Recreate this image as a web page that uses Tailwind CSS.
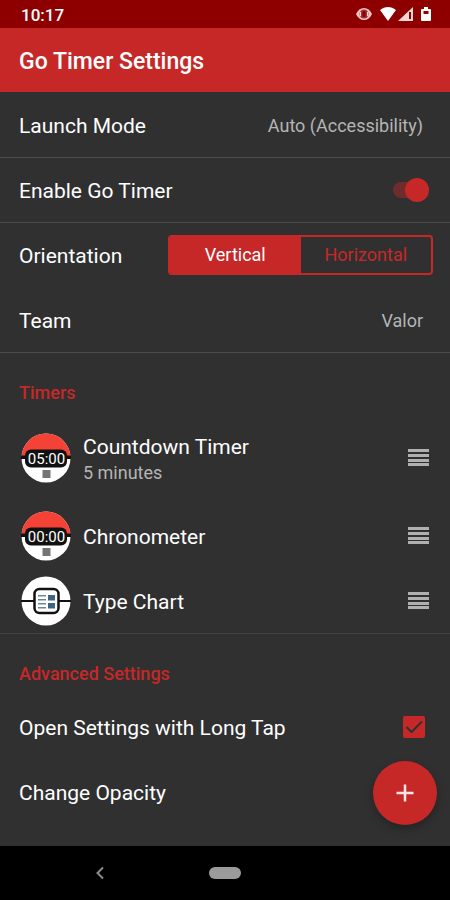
<!DOCTYPE html>
<html lang="en">
<head>
<meta charset="utf-8">
<meta name="viewport" content="width=device-width, initial-scale=1">
<title>Go Timer Settings</title>
<script src="https://cdn.jsdelivr.net/npm/@tailwindcss/browser@4"></script>
</head>
<body class="flex min-h-screen flex-col bg-[#303030] font-['Roboto',sans-serif] text-[21px] leading-7 text-white">
  <!-- Status bar -->
  <div class="flex h-7 items-center justify-between bg-[#8e0000] pt-0.5 pr-[18px] pl-[21px]">
    <span class="text-[17px] font-medium">10:17</span>
    <div class="flex items-center">
      <svg class="mr-2 h-4 w-4" viewBox="0 0 16 16" aria-hidden="true"><path d="M0 7C2 3 4.500 1 8 1s6 2 8 6c-2 4-4.500 6-8 6S2 11 0 7z" fill="#f3c6c6"/><circle cx="8" cy="7" r="4.500" fill="#a33030"/><rect x="6.500" y="4" width="3" height="6" rx="1.500" fill="#8e0000"/><path d="M4.500 5v4M11.500 5v4" stroke="#f3d6d6"/></svg>
      <svg class="mr-0.5 h-4 w-4" viewBox="0 0 16 16" aria-hidden="true"><path d="M0 3C5-1 11-1 16 3L8 14z" fill="#fff"/></svg>
      <svg class="mr-1.5 h-4 w-4" viewBox="0 0 16 16" aria-hidden="true"><path d="M15 0v14H0z" fill="#f3d6d6"/><path d="M11 5h2v7h-2z" fill="#8e0000"/></svg>
      <svg class="h-4 w-3" viewBox="0 0 12 16" aria-hidden="true"><path d="M4 0h4v2h2a1 1 0 0 1 1 1v10a1 1 0 0 1-1 1H2a1 1 0 0 1-1-1V3a1 1 0 0 1 1-1h2z" fill="#fff"/><path d="M3.500 4h5v3h-5z" fill="#8e0000"/></svg>
    </div>
  </div>

  <header class="flex h-16 items-center bg-[#c62828] px-[19px] pt-1">
    <h1 class="text-[23px] font-medium">Go Timer Settings</h1>
  </header>

  <main class="relative grow">
    <section aria-label="General" class="border-b border-[#4b4b4b]">
      <button type="button" class="flex h-[66px] w-full items-center justify-between border-b border-[#4b4b4b] pt-0.5 pr-[27px] pl-[19px]">
        <span>Launch Mode</span><span class="text-lg text-[#b5b5b5]">Auto (Accessibility)</span>
      </button>
      <div class="flex h-[65px] items-center justify-between border-b border-[#4b4b4b] pr-[21px] pl-[19px]">
        <label for="enable" class="pt-0.5">Enable Go Timer</label>
        <input id="enable" type="checkbox" role="switch" checked class="relative h-6 w-10 appearance-none before:absolute before:top-1 before:left-1 before:h-4 before:w-8 before:rounded-full before:bg-[#702c2c] after:absolute after:top-0 after:left-0 after:h-6 after:w-6 after:rounded-full after:bg-[#bdbdbd] checked:after:left-4 checked:after:bg-[#c62828]">
      </div>
      <div class="flex h-[65px] items-center justify-between pr-[17px] pb-0.5 pl-[19px]">
        <span id="orientation" class="pt-0.5">Orientation</span>
        <div role="radiogroup" aria-labelledby="orientation" class="grid h-10 w-[265px] grid-cols-2 overflow-hidden rounded border-2 border-[#c62828] text-lg">
          <label class="relative flex items-center justify-center text-[#c62828] has-checked:bg-[#c62828] has-checked:text-white"><input type="radio" name="orientation" checked class="sr-only">Vertical</label>
          <label class="relative flex items-center justify-center text-[#c62828] has-checked:bg-[#c62828] has-checked:text-white"><input type="radio" name="orientation" class="sr-only">Horizontal</label>
        </div>
      </div>
      <button type="button" class="flex h-16 w-full items-center justify-between pt-0.5 pr-[27px] pl-[19px]">
        <span>Team</span><span class="text-lg text-[#b5b5b5]">Valor</span>
      </button>
    </section>

    <section aria-labelledby="timers" class="border-b border-[#424242]">
      <h2 id="timers" class="px-[19px] pt-[26px] pb-1 text-lg/7 font-medium text-[#c62828]">Timers</h2>
      <ul>
        <li class="flex h-[92px] items-center gap-[11px] px-5 pt-0.5">
          <svg class="h-[52px] w-[52px]" viewBox="0 0 52 52" role="img" aria-label="Countdown timer icon">
            <circle cx="26" cy="26" r="24.500" fill="#fff"/><path d="M1.500 26a24.500 24.500 0 0 1 49 0z" fill="#f44336"/><path d="M1 23.500h50v3.500H1z" fill="#111"/><rect x="5" y="17.500" width="42" height="18" rx="6" fill="#111"/>
            <text x="26.500" y="32" text-anchor="middle" font-size="15" fill="#fff">05:00</text><path d="M22.500 38h8v8h-8z" fill="#757575"/>
          </svg>
          <div class="grow pt-0.5"><div>Countdown Timer</div><div class="text-lg/6 text-[#b5b5b5]">5 minutes</div></div>
          <button type="button" aria-label="Reorder Countdown Timer"><svg class="h-6 w-6" viewBox="0 0 24 24" fill="#b0b0b0"><path d="M2 3h21v3H2zM2 8h21v3H2zM2 13h21v3H2zM2 17h21v3H2z"/></svg></button>
        </li>
        <li class="flex h-[65px] items-center gap-[11px] px-5">
          <svg class="h-[52px] w-[52px]" viewBox="0 0 52 52" role="img" aria-label="Chronometer icon">
            <circle cx="26" cy="26" r="24.500" fill="#fff"/><path d="M1.500 26a24.500 24.500 0 0 1 49 0z" fill="#f44336"/><path d="M1 23.500h50v3.500H1z" fill="#111"/><rect x="5" y="17.500" width="42" height="18" rx="6" fill="#111"/>
            <text x="26.500" y="32" text-anchor="middle" font-size="15" fill="#fff">00:00</text><path d="M22.500 38h8v8h-8z" fill="#757575"/>
          </svg>
          <span class="grow pt-0.5">Chronometer</span>
          <button type="button" aria-label="Reorder Chronometer"><svg class="h-6 w-6" viewBox="0 0 24 24" fill="#b0b0b0"><path d="M2 3h21v3H2zM2 8h21v3H2zM2 13h21v3H2zM2 17h21v3H2z"/></svg></button>
        </li>
        <li class="flex h-[65px] items-center gap-[11px] px-5">
          <svg class="h-[52px] w-[52px]" viewBox="0 0 52 52" role="img" aria-label="Type chart icon">
            <circle cx="26" cy="26" r="24.500" fill="#fff"/><path d="M1 25h50v2H1z" fill="#111"/><rect x="14.500" y="14" width="24" height="24" rx="5" fill="#fff" stroke="#111" stroke-width="2.500"/>
            <path d="M18 20h8v1.500h-8zM18 24h8v1.500h-8zM18 28h8v1.500h-8zM18 32h8v1.500h-8z" fill="#6b8799"/><path d="M28 20h7v5.500h-7zM28 28h7v5.500h-7z" fill="#3d6580"/>
          </svg>
          <span class="grow pt-0.5">Type Chart</span>
          <button type="button" aria-label="Reorder Type Chart"><svg class="h-6 w-6" viewBox="0 0 24 24" fill="#b0b0b0"><path d="M2 3h21v3H2zM2 8h21v3H2zM2 13h21v3H2zM2 17h21v3H2z"/></svg></button>
        </li>
      </ul>
    </section>

    <section aria-labelledby="advanced" class="pb-4">
      <h2 id="advanced" class="px-[19px] pt-[26px] pb-1.5 text-lg/7 font-medium text-[#c62828]">Advanced Settings</h2>
      <div class="flex h-[65px] items-center justify-between pr-[25px] pl-[19px]">
        <label for="longtap" class="pt-0.5">Open Settings with Long Tap</label>
        <span class="grid">
          <input id="longtap" type="checkbox" checked class="peer col-start-1 row-start-1 h-[22px] w-[22px] appearance-none rounded-xs border-2 border-[#c62828] checked:bg-[#c62828]">
          <svg class="pointer-events-none invisible col-start-1 row-start-1 h-[22px] w-[22px] peer-checked:visible" viewBox="0 0 22 22" fill="none" stroke="#303030" stroke-width="2" aria-hidden="true"><path d="M3.500 11l5 5L19 5.500"/></svg>
        </span>
      </div>
      <button type="button" class="flex h-[65px] w-full items-center px-[19px] pt-0.5">Change Opacity</button>
    </section>

    <button type="button" aria-label="Add timer" class="absolute right-[13px] bottom-[21px] grid h-16 w-16 place-items-center rounded-full bg-[#c62828] shadow-[0_4px_8px_rgba(0,0,0,0.25)]">
      <svg class="h-5 w-5" viewBox="0 0 20 20" fill="none" stroke="#ffe5e5" stroke-width="2.500" aria-hidden="true"><path d="M10 1.500v17M1.500 10h17"/></svg>
    </button>
  </main>

  <nav aria-label="System" class="grid h-[54px] grid-cols-[200px_1fr_200px] items-center bg-black">
    <button type="button" aria-label="Back" class="justify-self-center"><svg class="h-4 w-4" viewBox="0 0 16 16" fill="none" stroke="#8c8c8c" stroke-width="2" aria-hidden="true"><path d="M11 2.500L5.500 8l5.500 5.500"/></svg></button>
    <button type="button" aria-label="Home" class="h-3 w-8 justify-self-center rounded-full bg-[#9b9b9b]"></button>
  </nav>
</body>
</html>
